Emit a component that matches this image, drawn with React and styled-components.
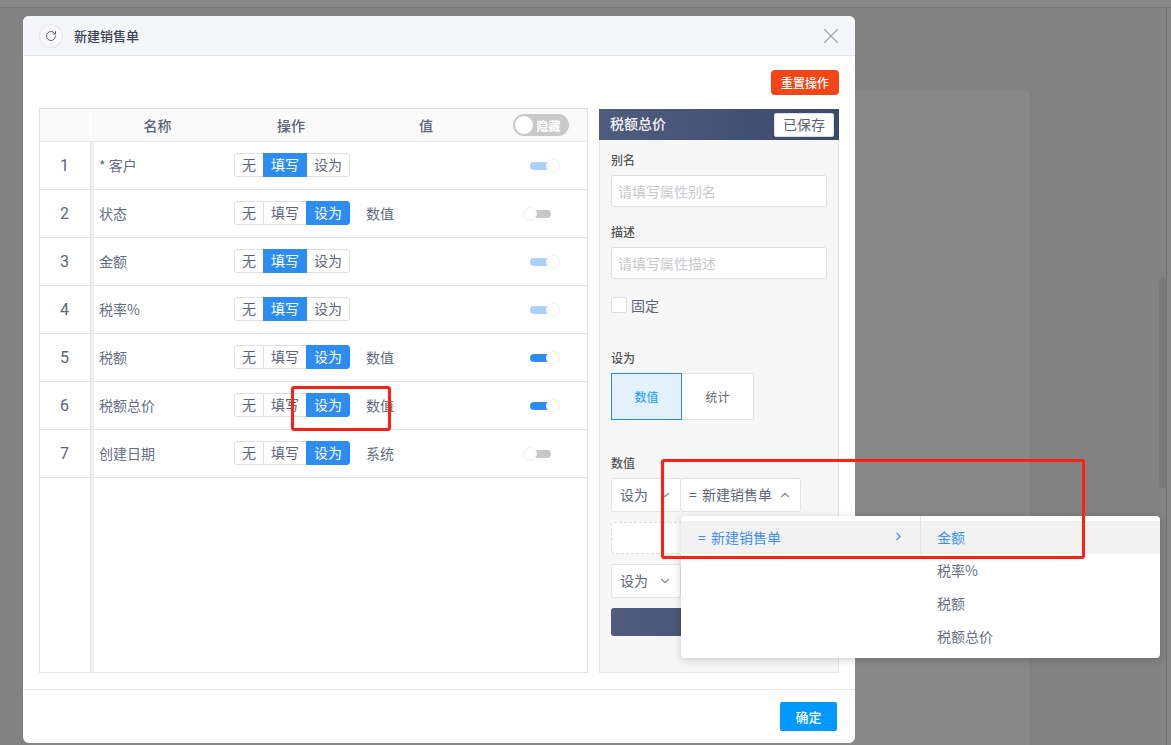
import React from "react";
import styled, { createGlobalStyle } from "styled-components";
import { RotateCw, X, ChevronDown, ChevronUp, ChevronRight } from "lucide-react";

const rows = [
  { name: "* 客户", mode: "fill", on: true, soft: true },
  { name: "状态", mode: "set", value: "数值", on: false },
  { name: "金额", mode: "fill", on: true, soft: true },
  { name: "税率%", mode: "fill", on: true, soft: true },
  { name: "税额", mode: "set", value: "数值", on: true },
  { name: "税额总价", mode: "set", value: "数值", on: true },
  { name: "创建日期", mode: "set", value: "系统", on: false },
];

const GlobalStyle = createGlobalStyle`
  html, body { margin: 0; padding: 0; height: 100%; overflow: hidden; }
  body { font-family: "Noto Sans CJK SC", "Noto Sans", sans-serif; }
  * { box-sizing: border-box; }
`;

const Page = styled.div`
  position: relative;
  width: 100vw;
  height: 100vh;
  overflow: hidden;
  background: #828282;
  display: flex;
  flex-direction: column;
`;

const TopBar = styled.div`
  height: 8px;
  flex: none;
  background: #888;
  border-bottom: 1px solid #747474;
`;

const Behind = styled.div`
  flex: 1;
  display: flex;
`;

const BehindMain = styled.div`
  flex: 1;
  padding: 83px 128px 0 30px;
  display: flex;
`;

const BehindPanel = styled.div`
  flex: 1;
  background: #888;
  border-right: 1px solid #7c7c7c;
`;

const ScrollTrack = styled.div`
  width: 7px;
  padding-top: 269px;
  background: #838383;
`;

const ScrollThumb = styled.div`
  height: 211px;
  border-radius: 4px;
  background: #797979;
`;

const Rail = styled.div`
  width: 5px;
  border-left: 1px solid #747474;
  background: #858585;
`;

const Modal = styled.div`
  position: absolute;
  left: 23px;
  top: 16px;
  width: 832px;
  height: 727px;
  background: #fff;
  border-radius: 6px;
  display: flex;
  flex-direction: column;
  overflow: hidden;
`;

const ModalHead = styled.div`
  height: 40px;
  flex: none;
  padding: 0 11px 0 16px;
  background: #f5f6fa;
  border-bottom: 1px solid #e6e7eb;
  display: flex;
  align-items: center;
`;

const RoundIcon = styled.span`
  width: 24px;
  height: 24px;
  border-radius: 50%;
  background: #fafafa;
  border: 1px solid #e6e6e6;
  color: #5b6375;
  display: flex;
  align-items: center;
  justify-content: center;
`;

const Title = styled.span`
  margin-left: 11px;
  font-size: 13px;
  font-weight: 500;
  color: #3c4250;
`;

const CloseBtn = styled.span`
  margin-left: auto;
  color: #a3a3a3;
  display: flex;
`;

const ModalBody = styled.div`
  flex: 1;
  min-height: 0;
  padding: 14px 16px 16px;
  display: flex;
  flex-direction: column;
`;

const Tools = styled.div`
  height: 25px;
  margin-bottom: 13px;
  flex: none;
  display: flex;
  justify-content: flex-end;
`;

const ResetBtn = styled.button`
  width: 68px;
  height: 25px;
  padding: 0;
  border: none;
  border-radius: 4px;
  background: #f44516;
  color: #fff;
  font: 500 12px "Noto Sans CJK SC", sans-serif;
`;

const Columns = styled.div`
  flex: 1;
  min-height: 0;
  display: flex;
  gap: 11px;
`;

const Table = styled.div`
  width: 549px;
  border: 1px solid #e2e2e2;
  display: flex;
  flex-direction: column;
`;

const Row = styled.div`
  display: grid;
  grid-template-columns: 51px 133px 134px 136px 1fr;
  height: ${(p) => (p.$head ? "33px" : "48px")};
  flex: none;
  border-bottom: 1px solid #e6e6e6;
  background: ${(p) => (p.$head ? "#fafafa" : "#fff")};
`;

const Filler = styled.div`
  flex: 1;
  display: flex;
`;

const IndexCell = styled.div`
  position: relative;
  width: 51px;
  display: flex;
  align-items: center;
  justify-content: center;
  font: 16px Roboto, sans-serif;
  color: #5e6578;
  padding-right: 1px;
  ${(p) =>
    p.$head
      ? `border-right: 1px solid #fff;`
      : `
    border-right: 1px solid #e4e4e4;
    &::after {
      content: "";
      position: absolute;
      left: 100%;
      top: 0;
      bottom: 0;
      width: 5px;
      margin-left: 1px;
      background: linear-gradient(90deg, rgba(0, 0, 0, 0.07), rgba(0, 0, 0, 0));
    }
  `}
`;

const HeadCell = styled.div`
  display: flex;
  align-items: center;
  justify-content: center;
  padding-bottom: 1px;
  font-size: 14px;
  font-weight: 500;
  color: #5b6375;
`;

const NameCell = styled.div`
  display: flex;
  align-items: center;
  padding: 0 0 2px 8px;
  font-size: 14px;
  color: #666c7e;
`;

const OpCell = styled.div`
  display: flex;
  align-items: center;
  padding: 0 0 1px 10px;
`;

const ValueCell = styled.div`
  display: flex;
  align-items: center;
  padding: 0 0 2px 8px;
  font-size: 14px;
  color: #666c7e;
`;

const SwitchCell = styled.div`
  display: flex;
  align-items: center;
  justify-content: center;
`;

const Segment = styled.div`
  display: flex;
  height: 24px;
`;

const SegItem = styled.span`
  width: ${(p) => p.$w}px;
  margin-left: ${(p) => (p.$first ? 0 : -1)}px;
  padding-bottom: 2px;
  display: flex;
  align-items: center;
  justify-content: center;
  font-size: 14px;
  border: 1px solid ${(p) => (p.$active ? "#2d8cf0" : "#dcdfe6")};
  background: ${(p) => (p.$active ? "#2d8cf0" : "#fff")};
  color: ${(p) => (p.$active ? "#fff" : "#5f6577")};
  position: ${(p) => (p.$active ? "relative" : "static")};
  border-radius: ${(p) => (p.$first ? "3px 0 0 3px" : p.$last ? "0 3px 3px 0" : "0")};
`;

const SmallSwitch = styled.span`
  width: 37px;
  height: 14px;
  margin-left: 1px;
  display: flex;
  align-items: center;
  justify-content: ${(p) => (p.$on ? "flex-end" : "flex-start")};
  position: relative;
`;

const SmallTrack = styled.span`
  position: absolute;
  left: 7px;
  width: 21px;
  height: 8px;
  border-radius: 4px;
  background: ${(p) => (!p.$on ? "#c8c8c8" : p.$soft ? "#abd1fa" : "#2d8cf0")};
`;

const SmallKnob = styled.span`
  position: relative;
  width: 14px;
  height: 14px;
  border-radius: 50%;
  background: #fff;
  border: 1px solid #edf3fa;
`;

const HideSwitch = styled.span`
  width: 56px;
  height: 22px;
  border-radius: 11px;
  background: #c9c9c9;
  padding: 2px;
  display: flex;
  align-items: center;
  gap: 4px;
  font-size: 12px;
  font-weight: 700;
  color: #fff;
`;

const HideKnob = styled.span`
  width: 18px;
  height: 18px;
  border-radius: 50%;
  background: #fff;
`;

const Side = styled.div`
  width: 240px;
  margin-top: 1px;
  background: #f7f7f7;
  border: 1px solid #e4e4e4;
  border-top: none;
  display: flex;
  flex-direction: column;
`;

const SideHead = styled.div`
  height: 31px;
  margin: 0 -1px;
  padding: 0 5px 0 11px;
  flex: none;
  background: linear-gradient(90deg, #505c7e, #3a4a6b);
  display: flex;
  align-items: center;
  justify-content: space-between;
  font-size: 14px;
  font-weight: 500;
  color: #f2f3f6;
`;

const HeadText = styled.span`
  padding-bottom: 3px;
`;

const SavedBtn = styled.span`
  width: 60px;
  height: 24px;
  padding-bottom: 2px;
  background: #fff;
  border: 1px solid #dcdfe6;
  border-radius: 2px;
  display: flex;
  align-items: center;
  justify-content: center;
  font-weight: 400;
  color: #5b6375;
`;

const SideBody = styled.div`
  padding: 11px 11px 0;
  display: flex;
  flex-direction: column;
`;

const Label = styled.div`
  height: 18px;
  line-height: 18px;
  margin-bottom: 6px;
  font-size: 12px;
  font-weight: 500;
  color: #555;
`;

const Input = styled.input`
  display: block;
  width: 100%;
  height: 32px;
  margin-bottom: ${(p) => p.$mb}px;
  padding: 0 6px;
  border: 1px solid #dcdfe6;
  border-radius: 3px;
  outline: none;
  background: #fff;
  font: 14px "Noto Sans CJK SC", sans-serif;
  &::placeholder { color: #c8c9cc; }
`;

const CheckRow = styled.label`
  height: 16px;
  margin-bottom: 36px;
  display: flex;
  align-items: center;
  gap: 4px;
  font-size: 14px;
  color: #5f6577;
`;

const CheckText = styled.span`
  line-height: 14px;
  margin-top: -1px;
`;

const CheckBox = styled.span`
  width: 16px;
  height: 16px;
  flex: none;
  background: #fff;
  border: 1px solid #dcdfe6;
  border-radius: 2px;
`;

const Tabs = styled.div`
  display: flex;
  margin-bottom: 34px;
`;

const Tab = styled.span`
  width: ${(p) => p.$w}px;
  height: 47px;
  display: flex;
  align-items: center;
  justify-content: center;
  font-size: 12px;
  background: ${(p) => (p.$active ? "#e3f1fa" : "#fff")};
  border: 1px solid ${(p) => (p.$active ? "#2b8bd8" : "#e4e4e4")};
  border-left-width: ${(p) => (p.$active ? 1 : 0)}px;
  color: ${(p) => (p.$active ? "#0f9bff" : "#666")};
`;

const SelectRow = styled.div`
  display: flex;
  margin-bottom: 10px;
`;

const Select = styled.span`
  width: ${(p) => p.$w}px;
  height: 34px;
  padding: 0 8px 3px;
  margin-left: ${(p) => (p.$joined ? -1 : 0)}px;
  background: #fff;
  border: 1px solid #e4e4e4;
  border-radius: 3px;
  display: flex;
  align-items: center;
  justify-content: space-between;
  font-size: 14px;
  word-spacing: 2px;
  color: #5f6577;
  svg { color: #8a8f9c; flex: none; margin-top: 2px; }
`;

const DashedBox = styled.div`
  height: 32px;
  margin-bottom: 10px;
  border: 1px dashed #dcdcdc;
  border-radius: 3px;
  background: #fff;
`;

const DarkBtn = styled.div`
  height: 28px;
  border-radius: 3px;
  background: linear-gradient(90deg, #505c7e, #3a4a6b);
`;

const ModalFoot = styled.div`
  height: 54px;
  flex: none;
  padding: 12px 18px 0 0;
  border-top: 1px solid #e6e6e6;
  display: flex;
  justify-content: flex-end;
  align-items: flex-start;
`;

const OkBtn = styled.button`
  width: 57px;
  height: 29px;
  padding: 0;
  border: none;
  border-radius: 2px;
  background: #0099ff;
  color: #fff;
  font: 500 13px "Noto Sans CJK SC", sans-serif;
`;

const Dropdown = styled.div`
  position: absolute;
  left: 681px;
  top: 516px;
  width: 479px;
  height: 142px;
  padding: 5px 0;
  background: #fff;
  border-radius: 4px;
  box-shadow: 0 2px 8px rgba(0, 0, 0, 0.18);
  display: flex;
  &::before {
    content: "";
    position: absolute;
    left: 239px;
    top: 0;
    height: 38px;
    border-left: 1px solid #e4e4e4;
  }
`;

const DropCol = styled.div`
  width: ${(p) => p.$w};
  flex: ${(p) => (p.$w ? "none" : 1)};
`;

const DropItem = styled.div`
  height: 33px;
  padding: ${(p) => (p.$left ? "0 15px 2px 17px" : "0 0 2px 17px")};
  display: flex;
  align-items: center;
  justify-content: space-between;
  font-size: 14px;
  word-spacing: 2px;
  background: ${(p) => (p.$active ? "#f2f2f2" : "#fff")};
  color: ${(p) => (p.$active ? "#3d8ff0" : "#686e80")};
`;

const Mark = styled.div`
  position: absolute;
  left: ${(p) => p.$x}px;
  top: ${(p) => p.$y}px;
  width: ${(p) => p.$w}px;
  height: ${(p) => p.$h}px;
  border: 3px solid #ff2018;
  border-radius: 3px;
  pointer-events: none;
`;

function OpSegment({ mode }) {
  return (
    <Segment>
      <SegItem $w={30} $first>无</SegItem>
      <SegItem $w={44} $active={mode === "fill"}>填写</SegItem>
      <SegItem $w={44} $last $active={mode === "set"}>设为</SegItem>
    </Segment>
  );
}

export default function App() {
  return (
    <Page>
      <GlobalStyle />
      <TopBar />
      <Behind>
        <BehindMain>
          <BehindPanel />
        </BehindMain>
        <ScrollTrack>
          <ScrollThumb />
        </ScrollTrack>
        <Rail />
      </Behind>

      <Modal>
        <ModalHead>
          <RoundIcon>
            <RotateCw size={12} strokeWidth={2} />
          </RoundIcon>
          <Title>新建销售单</Title>
          <CloseBtn>
            <X size={26} strokeWidth={1} />
          </CloseBtn>
        </ModalHead>

        <ModalBody>
          <Tools>
            <ResetBtn>重置操作</ResetBtn>
          </Tools>
          <Columns>
            <Table>
              <Row $head>
                <IndexCell $head />
                <HeadCell>名称</HeadCell>
                <HeadCell>操作</HeadCell>
                <HeadCell>值</HeadCell>
                <SwitchCell>
                  <HideSwitch>
                    <HideKnob />
                    隐藏
                  </HideSwitch>
                </SwitchCell>
              </Row>
              {rows.map((r, i) => (
                <Row key={r.name}>
                  <IndexCell>{i + 1}</IndexCell>
                  <NameCell>{r.name}</NameCell>
                  <OpCell>
                    <OpSegment mode={r.mode} />
                  </OpCell>
                  <ValueCell>{r.value}</ValueCell>
                  <SwitchCell>
                    <SmallSwitch $on={r.on}>
                      <SmallTrack $on={r.on} $soft={r.soft} />
                      <SmallKnob />
                    </SmallSwitch>
                  </SwitchCell>
                </Row>
              ))}
              <Filler>
                <IndexCell />
              </Filler>
            </Table>

            <Side>
              <SideHead>
                <HeadText>税额总价</HeadText>
                <SavedBtn>已保存</SavedBtn>
              </SideHead>
              <SideBody>
                <Label>别名</Label>
                <Input $mb={16} placeholder="请填写属性别名" />
                <Label>描述</Label>
                <Input $mb={18} placeholder="请填写属性描述" />
                <CheckRow>
                  <CheckBox />
                  <CheckText>固定</CheckText>
                </CheckRow>
                <Label>设为</Label>
                <Tabs>
                  <Tab $w={71} $active>数值</Tab>
                  <Tab $w={72}>统计</Tab>
                </Tabs>
                <Label>数值</Label>
                <SelectRow>
                  <Select $w={70}>
                    设为
                    <ChevronDown size={14} />
                  </Select>
                  <Select $w={121} $joined>
                    = 新建销售单
                    <ChevronUp size={14} />
                  </Select>
                </SelectRow>
                <DashedBox />
                <SelectRow>
                  <Select $w={70}>
                    设为
                    <ChevronDown size={14} />
                  </Select>
                </SelectRow>
                <DarkBtn />
              </SideBody>
            </Side>
          </Columns>
        </ModalBody>

        <ModalFoot>
          <OkBtn>确定</OkBtn>
        </ModalFoot>
      </Modal>

      <Dropdown>
        <DropCol $w="239px">
          <DropItem $left $active>
            = 新建销售单
            <ChevronRight size={13} />
          </DropItem>
        </DropCol>
        <DropCol>
          <DropItem $active>金额</DropItem>
          <DropItem>税率%</DropItem>
          <DropItem>税额</DropItem>
          <DropItem>税额总价</DropItem>
        </DropCol>
      </Dropdown>

      <Mark $x={291} $y={386} $w={100} $h={45} />
      <Mark $x={661} $y={459} $w={424} $h={100} />
    </Page>
  );
}
